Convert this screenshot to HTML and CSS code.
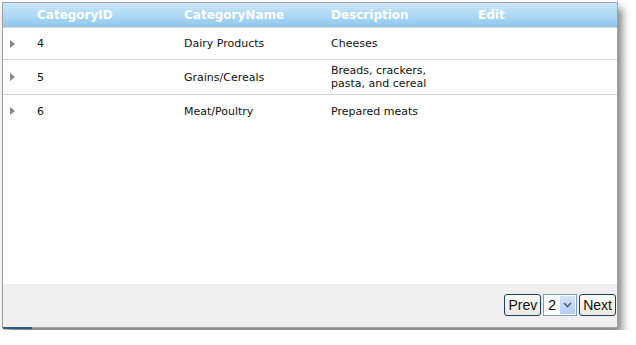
FILE: index.html
```html
<!DOCTYPE html>
<html lang="en">
<head>
    <meta charset="UTF-8">
    <title>Categories</title>
    <link rel="stylesheet" href="styles.css">
</head>
<body>
    <div class="grid">
        <div class="grid-header">
            <div class="cell expander"></div>
            <div class="cell">CategoryID</div>
            <div class="cell">CategoryName</div>
            <div class="cell">Description</div>
            <div class="cell">Edit</div>
        </div>
        <div class="grid-body">
            <div class="row">
                <div class="cell expander"><span class="arrow"></span></div>
                <div class="cell">4</div>
                <div class="cell">Dairy Products</div>
                <div class="cell">Cheeses</div>
                <div class="cell"></div>
            </div>
            <div class="row">
                <div class="cell expander"><span class="arrow"></span></div>
                <div class="cell">5</div>
                <div class="cell">Grains/Cereals</div>
                <div class="cell">Breads, crackers, pasta, and cereal</div>
                <div class="cell"></div>
            </div>
            <div class="row last">
                <div class="cell expander"><span class="arrow"></span></div>
                <div class="cell">6</div>
                <div class="cell">Meat/Poultry</div>
                <div class="cell">Prepared meats</div>
                <div class="cell"></div>
            </div>
        </div>
        <div class="pager">
            <button class="btn">Prev</button>
            <div class="page-select">
                <span>2</span>
                <span class="drop">
                    <svg width="9" height="6" viewBox="0 0 9 6"><path d="M1 1 L4.5 4.5 L8 1" fill="none" stroke="#4d6185" stroke-width="1.6"/></svg>
                </span>
            </div>
            <button class="btn">Next</button>
        </div>
        <div class="tab-mark"></div>
    </div>
</body>
</html>
```

FILE: styles.css
```css
body {
    margin: 0;
    padding: 2px;
    background: white;
    font-family: "DejaVu Sans", Verdana, sans-serif;
}

.grid {
    position: relative;
    width: 614px;
    height: 324px;
    border: 1px solid #a0a0a0;
    background: white;
    display: flex;
    flex-direction: column;
    box-shadow: 4px 6px 8px rgba(0, 0, 0, 0.5);
}

.grid-header {
    display: flex;
    height: 24px;
    align-items: center;
    background: linear-gradient(#c9e7f9, #a9d6f4 60%, #8ec6ea);
    color: white;
    font-weight: bold;
    font-size: 12px;
    border-bottom: 1px solid #d8d8d8;
}

.cell {
    width: 147px;
    flex-shrink: 0;
    padding-right: 8px;
    box-sizing: border-box;
}

.expander {
    width: 34px;
    padding-left: 7px;
}

.grid-body {
    flex: 1;
    font-size: 11px;
    color: #111;
}

.row {
    display: flex;
    align-items: center;
    min-height: 32px;
    padding: 4px 0;
    box-sizing: border-box;
    border-bottom: 1px solid #d4d4d4;
    line-height: 13px;
}

.row.last {
    border-bottom: none;
}

.row .cell:nth-child(4) {
    padding-right: 36px;
}

.arrow {
    display: block;
    width: 0;
    height: 0;
    border-top: 4px solid transparent;
    border-bottom: 4px solid transparent;
    border-left: 5px solid #888;
}

.pager {
    height: 43px;
    background: #efefef;
    display: flex;
    justify-content: flex-end;
    align-items: flex-start;
    gap: 2px;
    padding: 10px 1px 0 0;
    box-sizing: border-box;
}

.btn {
    font-family: "Liberation Sans", Arial, sans-serif;
    font-size: 14px;
    height: 22px;
    padding: 0 3px;
    border: 1px solid #1c3f6e;
    border-radius: 3px;
    background: linear-gradient(#fdfdfb, #ebe9e0);
    color: #111;
}

.page-select {
    display: flex;
    align-items: center;
    justify-content: space-between;
    width: 34px;
    height: 22px;
    border: 1px solid #7f9db9;
    background: white;
    box-sizing: border-box;
    font-family: "Liberation Sans", Arial, sans-serif;
    font-size: 14px;
    padding-left: 4px;
}

.drop {
    display: flex;
    align-items: center;
    justify-content: center;
    width: 15px;
    height: 18px;
    margin-right: 1px;
    background: linear-gradient(#d5e3fb, #b5cdf7);
}

.tab-mark {
    position: absolute;
    left: 0;
    bottom: -2px;
    width: 29px;
    height: 2px;
    background: #2a5a8c;
}
```
